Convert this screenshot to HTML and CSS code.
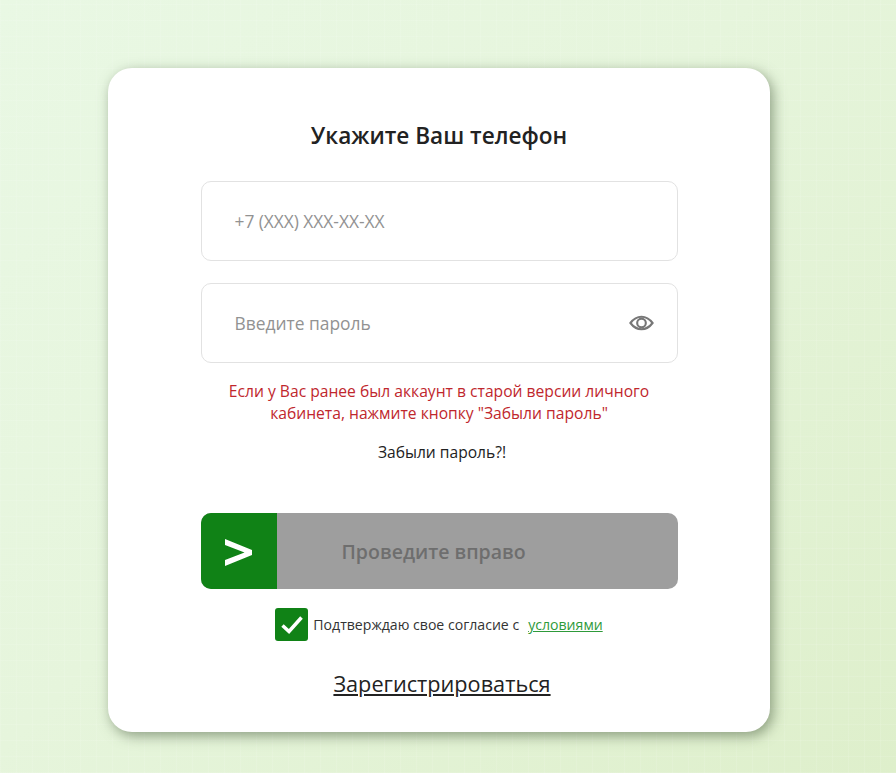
FILE: index.html
```html
<!DOCTYPE html>
<html lang="ru">
<head>
<meta charset="utf-8">
<title>Вход</title>
<link rel="stylesheet" href="styles.css">
</head>
<body>
<main class="card">
  <h1 class="title">Укажите Ваш телефон</h1>
  <div class="field"><span class="placeholder phone">+7 (XXX) XXX-XX-XX</span></div>
  <div class="field field-second">
    <span class="placeholder">Введите пароль</span>
    <svg class="eye" width="25" height="18" viewBox="0 0 26 18" fill="none" stroke="#777" stroke-width="2.200">
      <path d="M1.500 9C5 4.300 8.700 2.500 13 2.500S21 4.300 24.500 9C21 13.700 17.300 15.500 13 15.500S5 13.700 1.500 9Z"/>
      <circle cx="13" cy="9" r="4.500"/>
    </svg>
  </div>
  <p class="notice">Если у Вас ранее был аккаунт в старой версии личного кабинета, нажмите кнопку "Забыли пароль"</p>
  <a class="forgot">Забыли пароль?!</a>
  <div class="slider">
    <div class="handle">
      <svg class="chevron" width="27" height="27" viewBox="0 0 27 27" fill="#fff">
        <path d="M0 0 27 11V16L0 27V21L19.500 13.500 0 6Z"/>
      </svg>
    </div>
    <span class="slider-label">Проведите вправо</span>
  </div>
  <div class="consent">
    <span class="checkbox">
      <svg width="22" height="18" viewBox="0 0 22 18" fill="none" stroke="#fff" stroke-width="3.500">
        <path d="M1.500 9.500 8 15.500 20.500 1.500"/>
      </svg>
    </span>
    <span class="consent-text">Подтверждаю свое согласие с</span>
    <a class="terms">условиями</a>
  </div>
  <a class="register">Зарегистрироваться</a>
</main>
</body>
</html>
```
FILE: styles.css
```css
* {
  box-sizing: border-box;
}

html,
body {
  margin: 0;
  height: 773px;
  overflow: hidden;
}

body {
  background:
    repeating-linear-gradient(90deg, rgba(255, 255, 255, 0.1) 0 1px, transparent 1px 16px),
    repeating-linear-gradient(0deg, rgba(255, 255, 255, 0.1) 0 1px, transparent 1px 16px),
    linear-gradient(135deg, #e9f8e4 0%, #e6f5dc 45%, #deefcb 100%);
  font-family: "Open Sans", "Noto Sans", sans-serif;
  display: flex;
  justify-content: center;
  align-items: flex-start;
  padding: 68px 126px 0 108px;
}

.card {
  width: 662px;
  height: 664px;
  background: #fff;
  border-radius: 24px;
  box-shadow: 3px 4px 13px rgba(70, 90, 60, 0.55);
  display: flex;
  flex-direction: column;
  align-items: center;
  padding-top: 52px;
}

.title {
  margin: 0 0 29px;
  font-size: 22.600px;
  line-height: 32px;
  font-weight: 600;
  color: #222;
}

.field {
  width: 477px;
  height: 80px;
  flex: none;
  border: 1px solid #e2e2e2;
  border-radius: 10px;
  display: flex;
  align-items: center;
  justify-content: space-between;
  padding: 0 23px 0 33px;
}

.field-second {
  margin-top: 22px;
}

.placeholder {
  font-size: 17.400px;
  color: #929292;
}

.phone {
  letter-spacing: -0.050px;
}

.notice {
  width: 440px;
  margin: 17px 0 0;
  font-size: 15.650px;
  line-height: 22px;
  text-align: center;
  color: #c0272d;
}

.forgot {
  margin-top: 17px;
  font-size: 15.600px;
  line-height: 22px;
  color: #222;
  transform: translateX(3px);
}

.slider {
  width: 477px;
  height: 76px;
  flex: none;
  margin-top: 50px;
  background: #9e9e9e;
  border-radius: 10px;
  overflow: hidden;
  display: flex;
  align-items: center;
}

.handle {
  width: 76px;
  height: 76px;
  flex: none;
  background: #108216;
  display: flex;
  align-items: center;
  justify-content: center;
  padding-top: 3px;
}

.chevron {
  flex: none;
}

.slider-label {
  margin-left: 65px;
  font-size: 19.500px;
  font-weight: 600;
  color: #6e6e6e;
}

.consent {
  margin-top: 19px;
  display: flex;
  align-items: center;
}

.checkbox {
  width: 33px;
  height: 33px;
  background: #108216;
  border-radius: 3px;
  display: flex;
  align-items: center;
  justify-content: center;
}

.consent-text {
  margin-left: 5px;
  font-size: 14.100px;
  color: #333;
}

.terms {
  margin-left: 9px;
  font-size: 14.100px;
  color: #2e9a3a;
  text-decoration: underline;
}

.register {
  margin-top: 28px;
  font-size: 21.700px;
  line-height: 30px;
  color: #222;
  text-decoration: underline;
  transform: translateX(3px);
}

.eye {
  flex: none;
}
```
